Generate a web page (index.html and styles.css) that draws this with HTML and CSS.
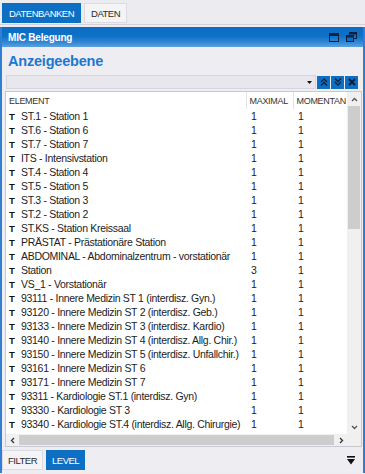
FILE: index.html
```html
<!DOCTYPE html>
<html lang="de">
<head>
    <meta charset="UTF-8">
    <meta name="viewport" content="width=device-width, initial-scale=1.0">
    <title>MIC Belegung</title>
    <link rel="stylesheet" href="styles.css">
</head>
<body>
    <!-- obere Reiter -->
    <div class="top-tabs">
        <div class="tab active">DATENBANKEN</div>
        <div class="tab">DATEN</div>
    </div>

    <div class="window">
        <div class="titlebar">
            <span class="title">MIC Belegung</span>
            <div class="title-icons">
                <svg width="10" height="9" viewBox="0 0 10 9">
                    <rect x="0.5" y="0.5" width="9" height="8" fill="none" stroke="#0d2240"/>
                    <rect x="0.5" y="0.5" width="9" height="2.5" fill="#0d2240"/>
                </svg>
                <svg width="11" height="10" viewBox="0 0 11 10">
                    <rect x="3.5" y="0.5" width="7" height="6" fill="none" stroke="#0d2240"/>
                    <rect x="3.5" y="0.5" width="7" height="2" fill="#0d2240"/>
                    <rect x="0.5" y="3.5" width="7" height="6" fill="#0a6fc4" stroke="#0d2240"/>
                    <rect x="0.5" y="3.5" width="7" height="2" fill="#0d2240"/>
                </svg>
            </div>
        </div>

        <div class="panel">
            <h1>Anzeigeebene</h1>

            <div class="filter-row">
                <div class="filter-input">
                    <svg class="caret" width="5" height="3" viewBox="0 0 5 3"><polygon points="0,0 5,0 2.5,3" fill="#111"/></svg>
                </div>
                <div class="fbtn">
                    <svg width="8" height="8" viewBox="0 0 8 8"><polyline points="1,4 4,1 7,4" fill="none" stroke="#0d2240" stroke-width="1.4"/><polyline points="1,7.5 4,4.5 7,7.5" fill="none" stroke="#0d2240" stroke-width="1.4"/></svg>
                </div>
                <div class="fbtn">
                    <svg width="8" height="8" viewBox="0 0 8 8"><polyline points="1,0.5 4,3.5 7,0.5" fill="none" stroke="#0d2240" stroke-width="1.4"/><polyline points="1,4 4,7 7,4" fill="none" stroke="#0d2240" stroke-width="1.4"/></svg>
                </div>
                <div class="fbtn">
                    <svg width="8" height="8" viewBox="0 0 8 8"><path d="M1 1 L7 7 M7 1 L1 7" stroke="#0d1a30" stroke-width="1.8"/></svg>
                </div>
            </div>

            <div class="grid-box">
                <div class="table-area">
                    <table>
                        <colgroup>
                            <col class="c-el">
                            <col class="c-max">
                            <col class="c-mom">
                        </colgroup>
                        <thead>
                            <tr>
                                <th>ELEMENT</th>
                                <th class="sep">MAXIMAL</th>
                                <th class="sep">MOMENTAN</th>
                            </tr>
                        </thead>
                        <tbody>
                            <tr><td><b class="t">T</b>ST.1 - Station 1</td><td>1</td><td>1</td></tr>
                            <tr><td><b class="t">T</b>ST.6 - Station 6</td><td>1</td><td>1</td></tr>
                            <tr><td><b class="t">T</b>ST.7 - Station 7</td><td>1</td><td>1</td></tr>
                            <tr><td><b class="t">T</b>ITS - Intensivstation</td><td>1</td><td>1</td></tr>
                            <tr><td><b class="t">T</b>ST.4 - Station 4</td><td>1</td><td>1</td></tr>
                            <tr><td><b class="t">T</b>ST.5 - Station 5</td><td>1</td><td>1</td></tr>
                            <tr><td><b class="t">T</b>ST.3 - Station 3</td><td>1</td><td>1</td></tr>
                            <tr><td><b class="t">T</b>ST.2 - Station 2</td><td>1</td><td>1</td></tr>
                            <tr><td><b class="t">T</b>ST.KS - Station Kreissaal</td><td>1</td><td>1</td></tr>
                            <tr><td><b class="t">T</b>PRÄSTAT - Prästationäre Station</td><td>1</td><td>1</td></tr>
                            <tr><td><b class="t">T</b>ABDOMINAL - Abdominalzentrum - vorstationär</td><td>1</td><td>1</td></tr>
                            <tr><td><b class="t">T</b>Station</td><td>3</td><td>1</td></tr>
                            <tr><td><b class="t">T</b>VS_1 - Vorstationär</td><td>1</td><td>1</td></tr>
                            <tr><td><b class="t">T</b>93111 - Innere Medizin ST 1 (interdisz. Gyn.)</td><td>1</td><td>1</td></tr>
                            <tr><td><b class="t">T</b>93120 - Innere Medizin ST 2 (interdisz. Geb.)</td><td>1</td><td>1</td></tr>
                            <tr><td><b class="t">T</b>93133 - Innere Medizin ST 3 (interdisz. Kardio)</td><td>1</td><td>1</td></tr>
                            <tr><td><b class="t">T</b>93140 - Innere Medizin ST 4 (interdisz. Allg. Chir.)</td><td>1</td><td>1</td></tr>
                            <tr><td><b class="t">T</b>93150 - Innere Medizin ST 5 (interdisz. Unfallchir.)</td><td>1</td><td>1</td></tr>
                            <tr><td><b class="t">T</b>93161 - Innere Medizin ST 6</td><td>1</td><td>1</td></tr>
                            <tr><td><b class="t">T</b>93171 - Innere Medizin ST 7</td><td>1</td><td>1</td></tr>
                            <tr><td><b class="t">T</b>93311 - Kardiologie ST.1 (interdisz. Gyn)</td><td>1</td><td>1</td></tr>
                            <tr><td><b class="t">T</b>93330 - Kardiologie ST 3</td><td>1</td><td>1</td></tr>
                            <tr><td><b class="t">T</b>93340 - Kardiologie ST.4 (interdisz. Allg. Chirurgie)</td><td>1</td><td>1</td></tr>
                        </tbody>
                    </table>
                </div>

                <!-- vertikale Scrollbar -->
                <div class="vscroll">
                    <div class="sbtn">
                        <svg width="7" height="5" viewBox="0 0 7 5"><polyline points="1,4 3.5,1.5 6,4" fill="none" stroke="#555" stroke-width="1.3"/></svg>
                    </div>
                    <div class="vthumb"></div>
                    <div class="vtrack"></div>
                    <div class="sbtn">
                        <svg width="7" height="5" viewBox="0 0 7 5"><polyline points="1,1 3.5,3.5 6,1" fill="none" stroke="#555" stroke-width="1.3"/></svg>
                    </div>
                </div>

                <!-- horizontale Scrollbar -->
                <div class="hscroll">
                    <div class="hbtn">
                        <svg width="5" height="7" viewBox="0 0 5 7"><polyline points="4,1 1.5,3.5 4,6" fill="none" stroke="#333" stroke-width="1.3"/></svg>
                    </div>
                    <div class="hthumb"></div>
                    <div class="hbtn">
                        <svg width="5" height="7" viewBox="0 0 5 7"><polyline points="1,1 3.5,3.5 1,6" fill="none" stroke="#333" stroke-width="1.3"/></svg>
                    </div>
                </div>
                <div class="corner"></div>
            </div>
        </div>

        <div class="bottom-bar">
            <div class="tab">FILTER</div>
            <div class="tab active">LEVEL</div>
            <svg class="collapse" width="8" height="9" viewBox="0 0 8 9">
                <rect x="0" y="0" width="8" height="1.6" fill="#111"/>
                <polygon points="0,3 8,3 4,8.5" fill="#111"/>
            </svg>
        </div>
    </div>
</body>
</html>
```

FILE: styles.css
```css
body {
    margin: 0;
    width: 365px;
    height: 474px;
    overflow: hidden;
    font-family: "Liberation Sans", Arial, sans-serif;
    background-color: #ecebf0;
    color: #1c1c1c;
}
.top-tabs {
    display: flex;
    gap: 3px;
    height: 25px;
    padding: 3px 0 0 2px;
    box-sizing: border-box;
    border-bottom: 1px solid #d3d2da;
}
.tab {
    height: 20px;
    padding: 0 6px;
    box-sizing: border-box;
    display: flex;
    align-items: center;
    font-size: 9.5px;
    letter-spacing: -0.5px;
    color: #2a2a2a;
    background-color: #f4f4f7;
    border: 1px solid #dcdbe2;
}
.tab.active {
    background-color: #0c6fc3;
    border-color: #0c6fc3;
    color: #fff;
}
.window {
    margin-top: 2px;
    height: 446px;
    border-left: 2px solid #2f7fd3;
    border-right: 2px solid #2f7fd3;
    display: flex;
    flex-direction: column;
}
.titlebar {
    height: 20px;
    flex: none;
    display: flex;
    align-items: center;
    justify-content: space-between;
    padding: 0 6px 0 6px;
    background: linear-gradient(#0a6cc3 0%, #0d71c6 45%, #2f86d3 75%, #5da1dd 100%);
}
.title {
    color: #fff;
    font-weight: bold;
    font-size: 10px;
    letter-spacing: -0.2px;
}
.title-icons {
    display: flex;
    align-items: center;
    gap: 7px;
}
.panel {
    flex: 1;
    display: flex;
    flex-direction: column;
    padding: 0 1px 0 3px;
    background-color: #eeedf2;
    min-height: 0;
}
h1 {
    margin: 4px 0 4px 3px;
    font-size: 14.5px;
    line-height: 20px;
    letter-spacing: -0.2px;
    color: #1b78d1;
}
.filter-row {
    display: flex;
    align-items: center;
    height: 14px;
    margin: 0 4px 2px 1px;
}
.filter-input {
    flex: 1;
    height: 14px;
    box-sizing: border-box;
    background-color: #e8e7ee;
    border: 1px solid #d6d5dd;
    display: flex;
    align-items: center;
    justify-content: flex-end;
    padding-right: 3px;
}
.fbtn {
    width: 13px;
    height: 13px;
    margin-left: 1px;
    background-color: #0c6fc3;
    display: flex;
    align-items: center;
    justify-content: center;
}
.grid-box {
    flex: 1;
    min-height: 0;
    display: grid;
    grid-template-columns: 1fr 14px;
    grid-template-rows: 1fr 12px;
    background-color: #fff;
    border: 1px solid #c9c8d0;
}
.table-area {
    overflow: hidden;
}
table {
    border-collapse: collapse;
    table-layout: fixed;
    width: 340px;
    font-size: 10.5px;
    letter-spacing: -0.3px;
}
.c-el {
    width: 240px;
}
.c-max {
    width: 47px;
}
.c-mom {
    width: 53px;
}
th {
    height: 17px;
    padding: 0 0 0 3px;
    text-align: left;
    font-weight: normal;
    font-size: 9px;
    letter-spacing: -0.3px;
    color: #333;
    white-space: nowrap;
    overflow: hidden;
}
th.sep {
    border-left: 1px solid #e4e4e8;
    padding-left: 3px;
}
td {
    height: 14px;
    padding: 0 0 0 5px;
    white-space: nowrap;
    overflow: hidden;
}
td:first-child {
    padding-left: 3px;
}
.t {
    display: inline-block;
    width: 12px;
    font-size: 9.5px;
    color: #111;
}
.vscroll {
    grid-row: 1;
    grid-column: 2;
    display: flex;
    flex-direction: column;
    background-color: #f0f0f0;
}
.sbtn {
    height: 14px;
    flex: none;
    display: flex;
    align-items: center;
    justify-content: center;
}
.vthumb {
    height: 123px;
    flex: none;
    margin: 0 1px;
    background-color: #cdcdcd;
}
.vtrack {
    flex: 1;
}
.hscroll {
    grid-row: 2;
    grid-column: 1;
    display: flex;
    background-color: #f0f0f0;
}
.hbtn {
    width: 12px;
    flex: none;
    display: flex;
    align-items: center;
    justify-content: center;
}
.hthumb {
    flex: 1;
    margin: 1px 1px;
    background-color: #cdcdcd;
}
.corner {
    grid-row: 2;
    grid-column: 2;
    background-color: #f0f0f0;
}
.bottom-bar {
    height: 26px;
    flex: none;
    display: flex;
    align-items: center;
    gap: 3px;
    background-color: #eeedf2;
}
.bottom-bar .tab {
    padding: 0 5px;
}
.collapse {
    margin-left: auto;
    margin-right: 8px;
}
```
